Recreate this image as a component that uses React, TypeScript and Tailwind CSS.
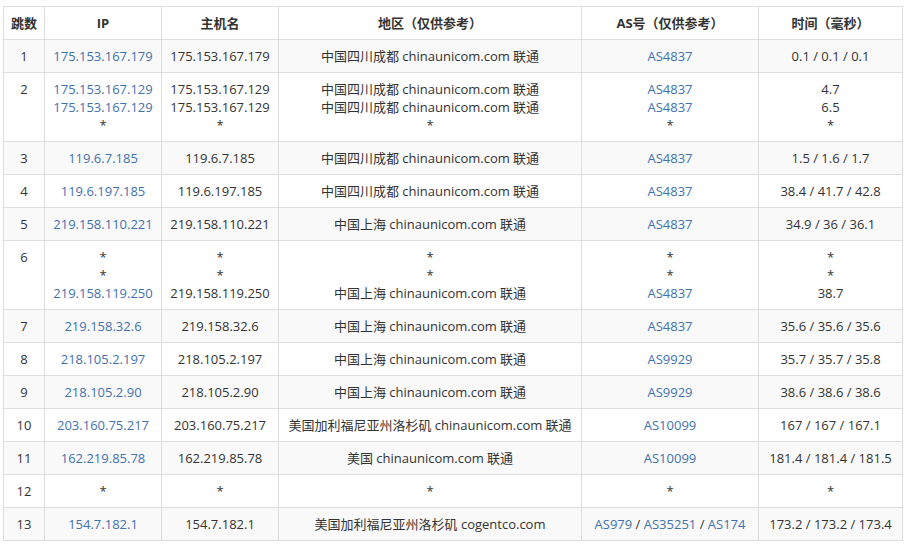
const L = 'text-[#3f72af]';

type Row = { n: string; ip: string[]; host: string[]; area: string[]; as: string[][]; t: string[] };

const rows: Row[] = [
  { n: '1', ip: ['175.153.167.179'], host: ['175.153.167.179'], area: ['中国四川成都 chinaunicom.com 联通'], as: [['AS4837']], t: ['0.1 / 0.1 / 0.1'] },
  { n: '2', ip: ['175.153.167.129', '175.153.167.129', '*'], host: ['175.153.167.129', '175.153.167.129', '*'], area: ['中国四川成都 chinaunicom.com 联通', '中国四川成都 chinaunicom.com 联通', '*'], as: [['AS4837'], ['AS4837'], ['*']], t: ['4.7', '6.5', '*'] },
  { n: '3', ip: ['119.6.7.185'], host: ['119.6.7.185'], area: ['中国四川成都 chinaunicom.com 联通'], as: [['AS4837']], t: ['1.5 / 1.6 / 1.7'] },
  { n: '4', ip: ['119.6.197.185'], host: ['119.6.197.185'], area: ['中国四川成都 chinaunicom.com 联通'], as: [['AS4837']], t: ['38.4 / 41.7 / 42.8'] },
  { n: '5', ip: ['219.158.110.221'], host: ['219.158.110.221'], area: ['中国上海 chinaunicom.com 联通'], as: [['AS4837']], t: ['34.9 / 36 / 36.1'] },
  { n: '6', ip: ['*', '*', '219.158.119.250'], host: ['*', '*', '219.158.119.250'], area: ['*', '*', '中国上海 chinaunicom.com 联通'], as: [['*'], ['*'], ['AS4837']], t: ['*', '*', '38.7'] },
  { n: '7', ip: ['219.158.32.6'], host: ['219.158.32.6'], area: ['中国上海 chinaunicom.com 联通'], as: [['AS4837']], t: ['35.6 / 35.6 / 35.6'] },
  { n: '8', ip: ['218.105.2.197'], host: ['218.105.2.197'], area: ['中国上海 chinaunicom.com 联通'], as: [['AS9929']], t: ['35.7 / 35.7 / 35.8'] },
  { n: '9', ip: ['218.105.2.90'], host: ['218.105.2.90'], area: ['中国上海 chinaunicom.com 联通'], as: [['AS9929']], t: ['38.6 / 38.6 / 38.6'] },
  { n: '10', ip: ['203.160.75.217'], host: ['203.160.75.217'], area: ['美国加利福尼亚州洛杉矶 chinaunicom.com 联通'], as: [['AS10099']], t: ['167 / 167 / 167.1'] },
  { n: '11', ip: ['162.219.85.78'], host: ['162.219.85.78'], area: ['美国 chinaunicom.com 联通'], as: [['AS10099']], t: ['181.4 / 181.4 / 181.5'] },
  { n: '12', ip: ['*'], host: ['*'], area: ['*'], as: [['*']], t: ['*'] },
  { n: '13', ip: ['154.7.182.1'], host: ['154.7.182.1'], area: ['美国加利福尼亚州洛杉矶 cogentco.com'], as: [['AS979', 'AS35251', 'AS174']], t: ['173.2 / 173.2 / 173.4'] },
];

const td = 'border border-[#dddddd] px-1 py-[7px] align-top text-center whitespace-nowrap';

export default function App() {
  return (
    <div className="bg-white pl-[3px] pt-[6px] text-[13px] leading-[18px] text-[#333]" style={{ fontFamily: '"Open Sans", "Noto Sans CJK SC", sans-serif' }}>
      <table className="border-collapse w-[899px] table-fixed">
        <colgroup>
          <col className="w-[41px]" />
          <col className="w-[117px]" />
          <col className="w-[117px]" />
          <col className="w-[303px]" />
          <col className="w-[177px]" />
          <col className="w-[144px]" />
        </colgroup>
        <thead>
          <tr>
            {['跳数', 'IP', '主机名', '地区（仅供参考）', 'AS号（仅供参考）', '时间（毫秒）'].map((h) => (
              <th key={h} className={td + ' font-bold'}>{h}</th>
            ))}
          </tr>
        </thead>
        <tbody>
          {rows.map((r, i) => (
            <tr key={r.n} className={i % 2 === 0 ? 'bg-[#f9f9f9]' : 'bg-white'}>
              <td className={td}>{r.n}</td>
              <td className={td}>{r.ip.map((x, k) => <div key={k} className={x === '*' ? '' : L}>{x}</div>)}</td>
              <td className={td}>{r.host.map((x, k) => <div key={k}>{x}</div>)}</td>
              <td className={td}>{r.area.map((x, k) => <div key={k}>{x}</div>)}</td>
              <td className={td}>
                {r.as.map((g, k) => (
                  <div key={k}>
                    {g.map((a, j) => (
                      <span key={j}>
                        {j > 0 && ' / '}
                        <span className={a === '*' ? '' : L}>{a}</span>
                      </span>
                    ))}
                  </div>
                ))}
              </td>
              <td className={td}>{r.t.map((x, k) => <div key={k}>{x}</div>)}</td>
            </tr>
          ))}
        </tbody>
      </table>
    </div>
  );
}
